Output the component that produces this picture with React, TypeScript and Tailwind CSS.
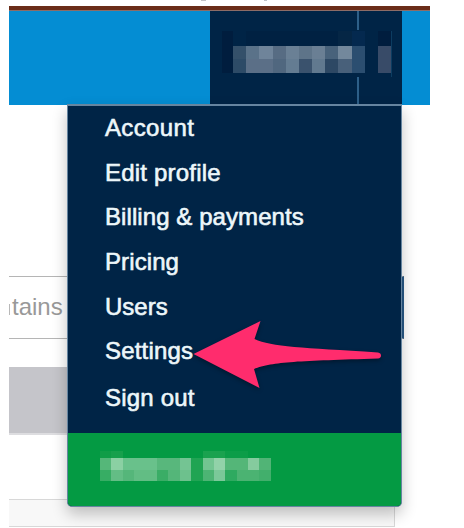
const items = [
  { label: 'Account', tracking: 'tracking-[0.35px]' },
  { label: 'Edit profile', tracking: 'tracking-[0.2px]' },
  { label: 'Billing & payments', tracking: 'tracking-[0.08px]' },
  { label: 'Pricing', tracking: 'tracking-[0.1px]' },
  { label: 'Users', tracking: 'tracking-normal' },
  { label: 'Settings', tracking: 'tracking-[0.2px]' },
  { label: 'Sign out', tracking: 'tracking-[0.2px]' },
];

const nameCells = [
  '#002446', '#002142', '#002142', '#002142', '#002142', '#002142', '#002142', '#002142', '#052645', '#04294f', '#002446', '#001d3e',
  '#34506a', '#5a7289', '#6f849a', '#576c83', '#6a8095', '#5e7489', '#6a7f94', '#48627b', '#73889c', '#2b4e70', '#002446', '#384b68',
  '#2d4b67', '#5b6f87', '#5b6f87', '#50677f', '#647c92', '#3a526d', '#61798f', '#2d4864', '#48607a', '#2b4e70', '#002446', '#384b68',
];

const companyCells = [
  '#109d47', '#17a04c', '#049a43', '#049a43', '#049a43', '#049a43', '#049a43', '#049a43', '#049a43', '#1aa24f', '#1aa24f', '#0c9d48', '#0c9d48', '#049a43', '#049a43',
  '#55b779', '#8bd0a3', '#69c18b', '#69c18b', '#69c18b', '#58b77c', '#58b77c', '#74c493', '#20a453', '#72c591', '#92d2a9', '#54b678', '#54b678', '#85cb9e', '#51b476',
  '#37ad64', '#63bd85', '#55b67a', '#62bd84', '#62bd84', '#3aad66', '#54b679', '#6dc18d', '#20a453', '#4db474', '#7bc899', '#2eaa60', '#4bb372', '#4bb372', '#42af6c',
];

function Header() {
  return (
    <div className="flex h-[94px] bg-[#048dd3]">
      <div className="w-[201px]" />
      <div className="relative flex w-[192px] bg-[#002446] pl-[12px] pt-[20px]">
        <div className="h-[42px] w-[11px] bg-[#001d3e]" />
        <div className="grid h-[42px] w-[158px] grid-cols-12 grid-rows-[15px_13px_14px]">
          {nameCells.map((color, i) => (
            <div key={i} style={{ backgroundColor: color }} />
          ))}
        </div>
        <div className="h-[46px] w-px bg-[#0c3c61]" />
        <div className="absolute left-[147px] top-0 h-[19px] w-[2px] bg-[#2d5f88]" />
        <div className="absolute bottom-0 left-[147px] h-[28px] w-[2px] bg-[#2d5f88]" />
      </div>
    </div>
  );
}

function Menu() {
  return (
    <div className="absolute left-[67px] top-[104px] h-[403px] w-[335px] overflow-hidden rounded-b-[5px] border-x border-b border-t-2 border-[#6685a0] bg-[#002446] shadow-[0_7px_15px_rgba(0,0,0,0.24)]">
      <ul className="flex h-[327px] flex-col pl-[37px]">
        {items.map(({ label, tracking }) => (
          <li
            key={label}
            className={`h-[44.7px] whitespace-nowrap text-[24px] leading-[44px] text-[#edf7fa] [-webkit-text-stroke:0.6px_#edf7fa] last:pt-[2px] ${tracking}`}
          >
            {label}
          </li>
        ))}
      </ul>
      <div className="h-[74px] bg-[#049a43] pl-[32px] pt-[18px]">
        <div className="grid h-[30px] w-[171px] grid-cols-[repeat(15,11.4px)] grid-rows-[7px_11.5px_11.5px]">
          {companyCells.map((color, i) => (
            <div key={i} style={{ backgroundColor: color }} />
          ))}
        </div>
      </div>
    </div>
  );
}

export default function App() {
  return (
    <div className="relative h-[528px] w-[464px] overflow-hidden bg-white font-['Liberation_Sans',Arial,sans-serif]">
      <div className="flex h-[6px] pl-[201px]">
        <div className="h-px w-[5px] bg-[#c3c3c7]" />
        <div className="ml-[58px] h-px w-[3px] bg-[#bfc2c8]" />
      </div>
      <div className="ml-[9px] w-[421px]">
        <div className="h-[5px] border-b border-[#8c6c67] bg-[#6b2d19]" />
        <Header />
        <div className="h-[171px]" />
        <div className="flex h-[63px] w-[395px] items-center border-y border-r-2 border-y-[#b5b5b5] border-r-[#285987] text-[24px] leading-[28px] text-[#999]">
          <div className="mt-[4px] h-[11px] w-px bg-[#b8b8b8]" />
          <span className="ml-[2px] -mt-[2px]">tains</span>
        </div>
        <div className="h-[28px]" />
        <div className="h-[68px] w-[386px] border-b-2 border-[#dddde0] bg-[#c5c5ca]" />
        <div className="h-[64px] w-[386px]" />
        <div className="h-[28px] w-[386px] border border-l-0 border-[#d8d8d8] bg-[#f8f8f8]" />
      </div>
      <Menu />
      <svg className="absolute left-[190px] top-[315px] drop-shadow-[0_2px_2px_rgba(0,0,0,0.35)]" width="195" height="80" viewBox="190 315 195 80">
        <path
          d="M193.5 354 L260.5 321 L254.5 339 C272 347 302 347.5 378 352.5 Q381 353 381 355.5 Q381 358 378 358.5 C300 361 273 361.5 254 369 L259.5 388 Z"
          fill="#ff2c6d"
        />
      </svg>
    </div>
  );
}
